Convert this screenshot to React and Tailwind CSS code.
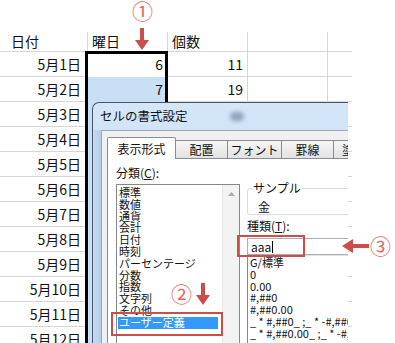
import React from 'react'

const dates = ['5月1日', '5月2日', '5月3日', '5月4日', '5月5日', '5月6日', '5月7日', '5月8日', '5月9日', '5月10日', '5月11日', '5月12日']
const values = [['6', '11'], ['7', '19']]

const categories = ['標準', '数値', '通貨', '会計', '日付', '時刻', 'パーセンテージ', '分数', '指数', '文字列', 'その他', 'ユーザー定義']
const formats = ['G/標準', '0', '0.00', '#,##0', '#,##0.00', '_ * #,##0_ ;_ * -#,##0_ ;_ * "-"_ ;_ @_ ', '_ * #,##0.00_ ;_ * -#,##0.00_ ;_ * "-"??_ ;_ @_ ']

function DownArrow({ className }) {
  return (
    <svg className={className} width="14" height="22" viewBox="0 0 14 22">
      <path d="M5 0h4v12h5l-7 10-7-10h5z" fill="#cc4e4a" />
    </svg>
  )
}

function LeftArrow({ className }) {
  return (
    <svg className={className} width="27" height="14" viewBox="0 0 27 14">
      <path d="M27 5v4H11v5L0 7l11-7v5z" fill="#cc4e4a" />
    </svg>
  )
}

function Sheet() {
  return (
    <div className="pt-[32px] text-[14px] text-[#111]">
      {/* 見出し行 */}
      <div className="flex h-[20px] w-[352px] border-b border-[#d6d6d6]">
        <div className="w-[88px] border-r border-[#d6d6d6] pl-[11px] leading-[18px]">日付</div>
        <div className="w-[80px] border-r border-[#d6d6d6] pl-[4px] leading-[18px]">曜日</div>
        <div className="w-[80px] border-r border-[#d6d6d6] pl-[4px] leading-[18px]">個数</div>
        <div className="w-[80px] border-r border-[#d6d6d6]" />
        <div className="flex-1" />
      </div>
      {dates.map((d, i) => (
        <div key={d} className="flex h-[25px] w-[352px]">
          <div className="w-[88px] border-r border-b border-[#d6d6d6] flex items-center justify-end pr-[6px]">{d}</div>
          <div className={i === 0 ? 'w-[80px] border-r border-[#d6d6d6] bg-white flex items-center justify-end pr-[4px]' : 'w-[80px] border-r border-[#d6d6d6] bg-[#c9dff6] flex items-center justify-end pr-[4px]'}>
            {values[i]?.[0]}
          </div>
          <div className="w-[80px] border-r border-b border-[#d6d6d6] flex items-center justify-end pr-[4px]">{values[i]?.[1]}</div>
          <div className="w-[80px] border-r border-b border-[#d6d6d6]" />
          <div className="flex-1 border-b border-[#d6d6d6]" />
        </div>
      ))}
    </div>
  )
}

function FormatDialog() {
  return (
    <div className="absolute left-[92px] top-[102px] w-[256px] h-[250px] overflow-hidden rounded-tl-[7px] border-l border-t border-[#4b5566] bg-linear-to-b from-[#d4e6f9] to-[#c0d7f0] flex flex-col text-[12px] text-[#111]">
      <div className="h-[27px] shrink-0 flex items-center pl-[7px]">
        <span className="text-[12.5px]">セルの書式設定</span>
        <span className="ml-[42px] w-[14px] h-[9px] rounded-full bg-[#8da3bd] blur-[2px]" />
      </div>
      <div className="flex-1 flex">
        <div className="w-[8px] shrink-0 bg-linear-to-r from-[#c6dcf3] to-[#b6cce6]" />
        <div className="flex-1 flex flex-col bg-[#f0f0f0] border-l border-t border-[#9aa8ba] pl-[5px] pt-[5px]">
          <div className="flex items-end h-[22px] w-[300px] whitespace-nowrap">
            <div className="w-[69px] h-[22px] bg-white border border-b-0 border-[#898c95] rounded-t-[2px] relative z-10 mb-[-1px] flex items-center justify-center">
              表示形式
            </div>
            <div className="w-[52px] h-[18px] border border-l-0 border-b-0 border-[#898c95] bg-linear-to-b from-[#f6f6f6] to-[#e2e2e2] flex items-center justify-center">配置</div>
            <div className="w-[54px] h-[18px] border border-l-0 border-b-0 border-[#898c95] bg-linear-to-b from-[#f6f6f6] to-[#e2e2e2] flex items-center justify-center">フォント</div>
            <div className="w-[52px] h-[18px] border border-l-0 border-b-0 border-[#898c95] bg-linear-to-b from-[#f6f6f6] to-[#e2e2e2] flex items-center justify-center">罫線</div>
            <div className="w-[60px] h-[18px] overflow-hidden border border-l-0 border-b-0 border-[#898c95] bg-linear-to-b from-[#f6f6f6] to-[#e2e2e2] flex items-center pl-[8px]">塗りつぶし</div>
          </div>
          <div className="flex-1 w-[300px] bg-white border border-[#898c95] flex gap-[7px] pl-[8px]">
            {/* 分類 */}
            <div className="w-[124px] shrink-0 flex flex-col">
              <div className="mt-[7px] h-[14px] leading-[14px]">分類(<span className="underline">C</span>):</div>
              <div className="mt-[4px] h-[170px] border border-[#828790] flex">
                <div className="flex-1 pt-[2px] pl-[1px] text-[11px]">
                  {categories.map((c, i) => (
                    <div key={c} className={i === categories.length - 1 ? 'h-[11.8px] leading-[11.8px] w-[100px] pl-[1px] bg-[#3399ff] text-white' : 'h-[11.8px] leading-[11.8px] pl-[1px]'}>
                      {c}
                    </div>
                  ))}
                </div>
                <div className="w-[17px] bg-[#f3f3f3] border-l border-[#e8e8e8] flex justify-center pt-[7px]">
                  <svg width="7" height="4" viewBox="0 0 7 4">
                    <path d="M0 4L3.5 0 7 4z" fill="#a9a9a9" />
                  </svg>
                </div>
              </div>
            </div>
            {/* サンプル・種類 */}
            <div className="w-[150px] shrink-0 flex flex-col">
              <fieldset className="mt-[22px] border border-[#d3dde4] rounded-[3px] pl-[4px]">
                <legend className="px-[1px] h-[14px] leading-[14px]">サンプル</legend>
                <div className="mt-[5px] ml-[6px] h-[14px] leading-[14px]">金</div>
              </fieldset>
              <div className="mt-[4px] h-[14px] leading-[14px]">種類(<span className="underline">T</span>):</div>
              <div className="mt-[5px] h-[17px] border border-[#abadb3] pl-[3px] flex items-center">
                aaa<span className="ml-[1px] w-px h-[12px] bg-black" />
              </div>
              <div className="h-[100px] border border-[#828790] border-t-[#e3e3e3] pl-[2px] pt-[1px] whitespace-nowrap text-[11px]">
                {formats.map((f) => (
                  <div key={f} className="h-[11.8px] leading-[11.8px]">{f}</div>
                ))}
              </div>
            </div>
          </div>
        </div>
      </div>
    </div>
  )
}

export default function App() {
  return (
    <div className="relative w-[395px] h-[343px] overflow-hidden bg-white font-['Noto_Sans_CJK_JP','Noto_Sans',sans-serif]">
      <Sheet />

      {/* 選択範囲の枠 */}
      <div className="absolute left-[85px] top-[51px] w-[83px] h-[320px] border-[3px] border-black" />

      <FormatDialog />

      {/* 注釈 */}
      <div className="absolute left-[132px] top-[0px] text-[21px] leading-[21px] text-[#e5665c]">①</div>
      <DownArrow className="absolute left-[135px] top-[28px]" />

      <div className="absolute left-[171px] top-[283px] text-[21px] leading-[21px] text-[#e5665c]">②</div>
      <DownArrow className="absolute left-[196px] top-[283px]" />

      <div className="absolute left-[370px] top-[235px] text-[21px] leading-[21px] text-[#e5665c]">③</div>
      <LeftArrow className="absolute left-[342px] top-[239px]" />

      <div className="absolute left-[111px] top-[312px] w-[112px] h-[24px] border-2 border-[#cc4e4a]" />
      <div className="absolute left-[237px] top-[235px] w-[68px] h-[22px] border-2 border-[#cc4e4a]" />
    </div>
  )
}
